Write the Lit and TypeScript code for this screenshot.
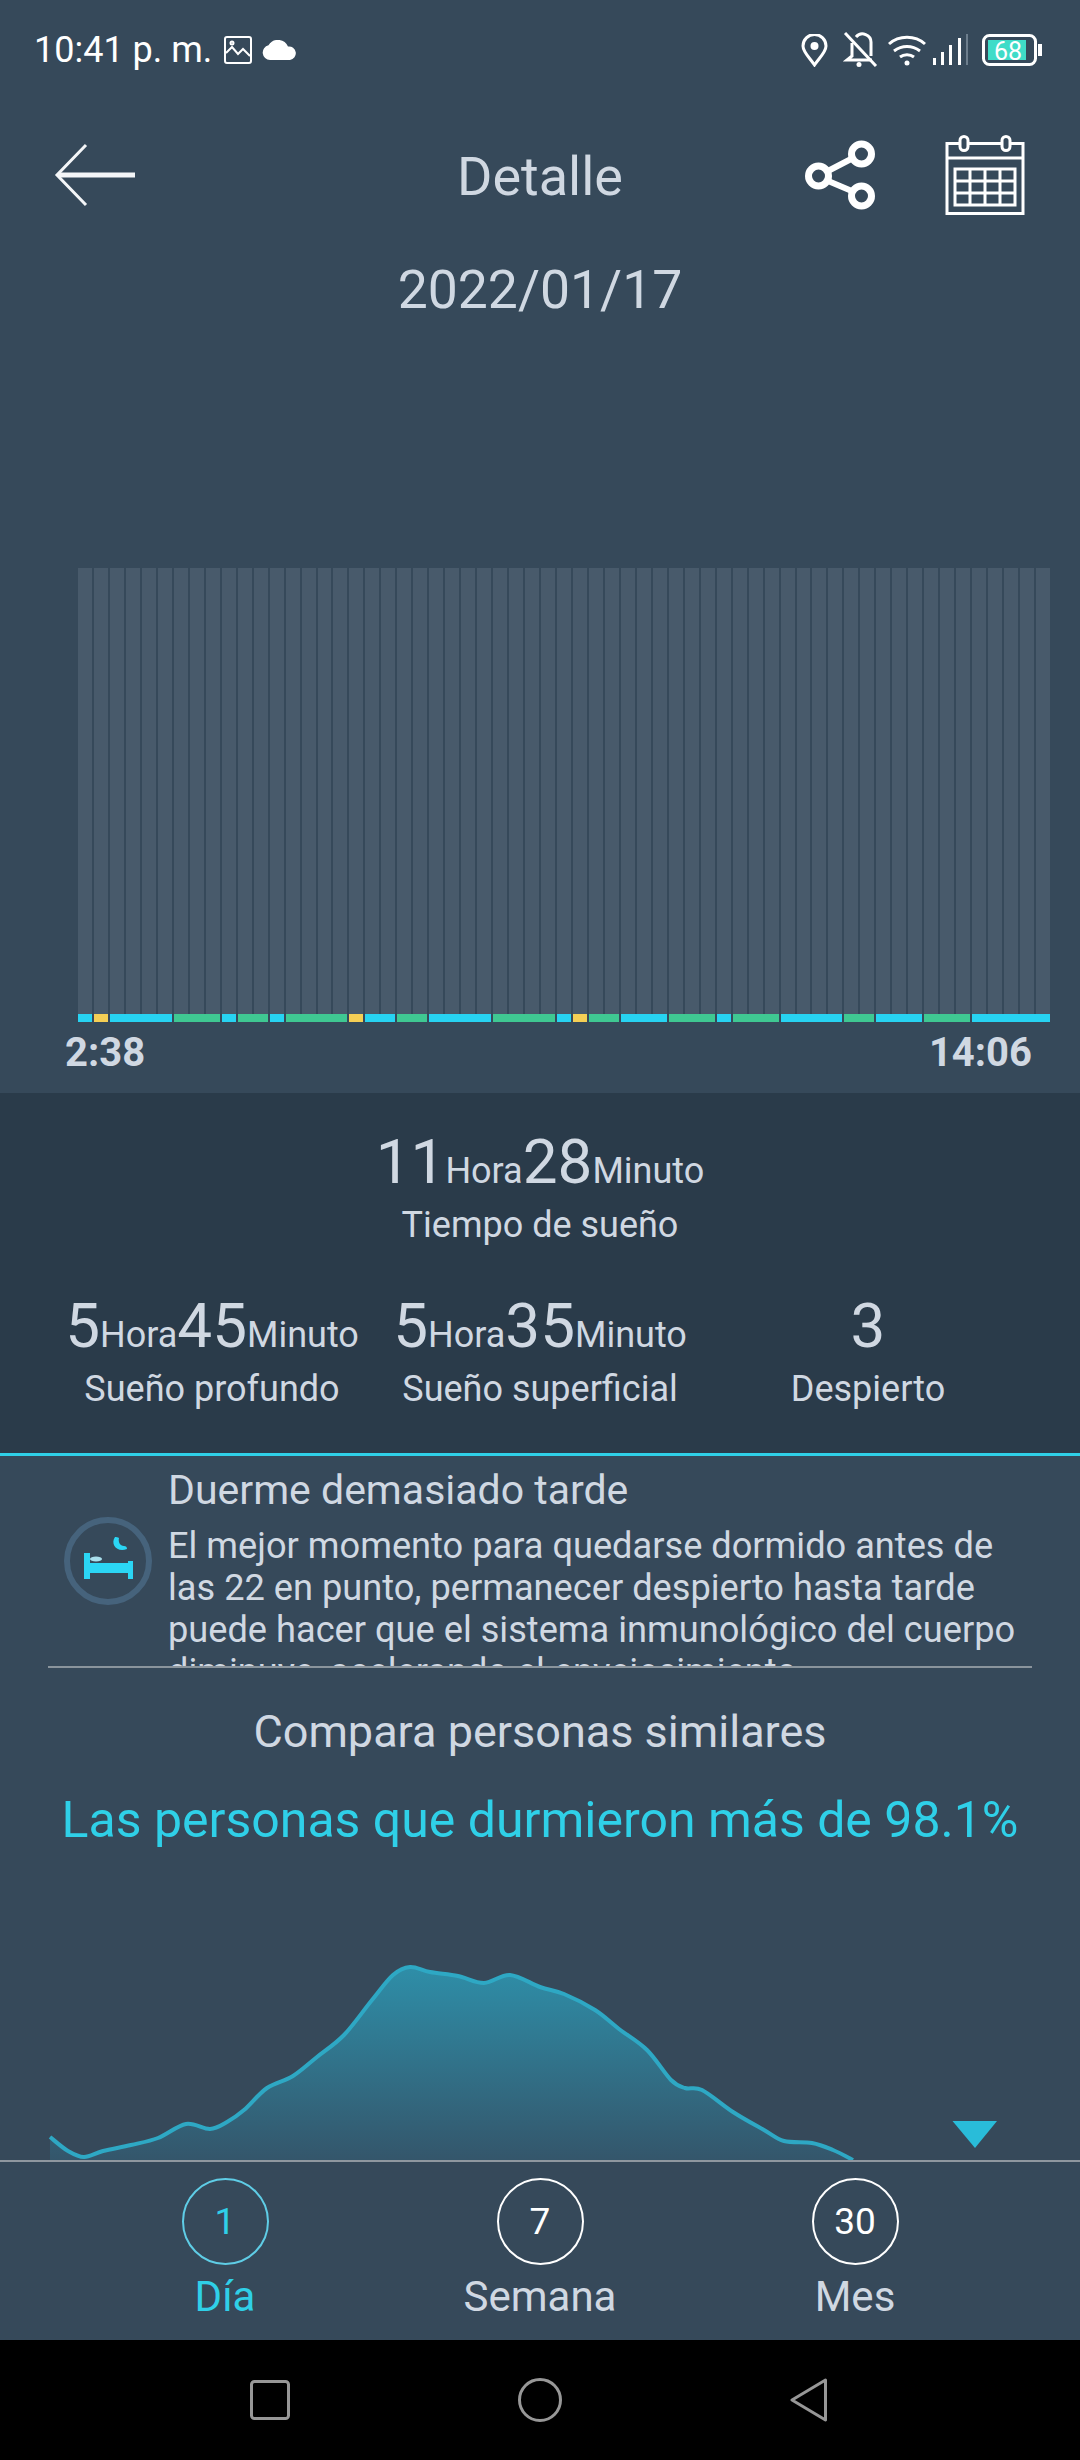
import { LitElement, html, css } from 'lit';
import { customElement } from 'lit/decorators.js';

type Stage = 'c' | 'y' | 'g';

// sleep stages, each one spanning a number of the 61 chart columns
const SEGMENTS: [Stage, number][] = [
  ['c', 1], ['y', 1], ['c', 4], ['g', 3], ['c', 1], ['g', 2], ['c', 1], ['g', 4],
  ['y', 1], ['c', 2], ['g', 2], ['c', 4], ['g', 4], ['c', 1], ['y', 1], ['g', 2],
  ['c', 3], ['g', 3], ['c', 1], ['g', 3], ['c', 4], ['g', 2], ['c', 3], ['g', 3], ['c', 5],
];

const STAGE_COLORS: Record<Stage, string> = { c: '#27d3f2', y: '#f5cf55', g: '#3fc892' };

const CURVE: [number, number][] = [
  [50, 2137], [68, 2151], [84, 2157], [103, 2151], [131, 2145], [158, 2138], [186, 2124],
  [210, 2129], [227, 2122], [244, 2110], [267, 2088], [293, 2076], [317, 2057], [344, 2035],
  [372, 2000], [393, 1975], [410, 1967], [430, 1972], [458, 1976], [484, 1983], [510, 1975],
  [540, 1987], [564, 1994], [595, 2010], [619, 2029], [647, 2050], [671, 2080], [685, 2088],
  [702, 2090], [733, 2112], [764, 2130], [784, 2141], [812, 2143], [833, 2150], [853, 2160],
];

// catmull-rom through the points
function smooth(pts: [number, number][]) {
  let d = `M${pts[0][0]} ${pts[0][1]}`;
  for (let i = 0; i < pts.length - 1; i++) {
    const p0 = pts[Math.max(i - 1, 0)];
    const p1 = pts[i];
    const p2 = pts[i + 1];
    const p3 = pts[Math.min(i + 2, pts.length - 1)];
    const c1x = p1[0] + (p2[0] - p0[0]) / 6;
    const c1y = p1[1] + (p2[1] - p0[1]) / 6;
    const c2x = p2[0] - (p3[0] - p1[0]) / 6;
    const c2y = p2[1] - (p3[1] - p1[1]) / 6;
    d += ` C${c1x.toFixed(1)} ${c1y.toFixed(1)} ${c2x.toFixed(1)} ${c2y.toFixed(1)} ${p2[0]} ${p2[1]}`;
  }
  return d;
}

@customElement('app-root')
export class AppRoot extends LitElement {
  static styles = css`
    :host {
      display: block;
      width: 1080px;
      height: 2460px;
      overflow: hidden;
      background: #36495a;
      color: #d0d8e2;
      font-family: Roboto, sans-serif;
    }
    svg {
      display: block;
    }

    .status {
      height: 100px;
      display: flex;
      align-items: center;
      justify-content: space-between;
      padding: 0 38px 0 34px;
      box-sizing: border-box;
      color: #fff;
    }
    .status-left {
      display: flex;
      align-items: center;
      font-size: 36px;
    }
    .status-left svg:first-of-type {
      margin-left: 12px;
    }
    .status-left svg:last-of-type {
      margin-left: 10px;
    }
    .status-right {
      display: flex;
      align-items: center;
    }

    .header {
      height: 150px;
      display: grid;
      grid-template-columns: 1fr auto 1fr;
      align-items: center;
    }
    .back {
      padding-left: 54px;
    }
    .title {
      font-size: 54px;
      padding-top: 2px;
    }
    .actions {
      display: flex;
      justify-content: flex-end;
      align-items: center;
      gap: 69px;
      padding-right: 55px;
    }
    .date {
      height: 80px;
      line-height: 80px;
      text-align: center;
      font-size: 53.5px;
    }

    .sleep-chart {
      margin: 238px 30px 0 78px;
      display: grid;
      grid-template-columns: repeat(61, 1fr);
      grid-template-rows: 446px 8px;
      column-gap: 2px;
    }
    .bar {
      background: #485a6b;
    }
    .times {
      display: flex;
      justify-content: space-between;
      padding: 9px 48px 18px 65px;
      font-size: 40px;
      line-height: 44px;
      font-weight: 700;
    }

    .summary {
      background: #2a3b4a;
      border-bottom: 3px solid #2fd0e8;
      padding: 39px 48px 42px;
      text-align: center;
    }
    .value {
      height: 60px;
      line-height: 60px;
      font-size: 62px;
      white-space: nowrap;
    }
    .value small {
      font-size: 36px;
    }
    .caption {
      margin-top: 11px;
      font-size: 36px;
      line-height: 44px;
    }
    .columns {
      margin-top: 49px;
      display: grid;
      grid-template-columns: repeat(3, 1fr);
    }
    .columns .caption {
      margin-top: 11px;
    }

    .advice {
      height: 210px;
      overflow: hidden;
      display: flex;
      gap: 16px;
      padding: 9px 40px 0 64px;
      box-sizing: border-box;
    }
    .advice svg {
      flex: none;
      margin-top: 52px;
    }
    .advice h2 {
      margin: 0 0 10px;
      font-size: 41px;
      line-height: 50px;
      font-weight: 400;
    }
    .advice p {
      margin: 0;
      font-size: 36.2px;
      line-height: 42px;
    }
    .rule {
      height: 2px;
      margin: 0 48px;
      background: #8a949c;
    }

    .compare {
      margin-top: 34px;
      text-align: center;
      font-size: 45px;
      line-height: 60px;
    }
    .percent {
      margin-top: 23px;
      text-align: center;
      font-size: 50px;
      line-height: 70px;
      color: #2fd0e8;
      white-space: nowrap;
    }

    .tabs {
      height: 180px;
      box-sizing: border-box;
      border-top: 2px solid #8f979f;
      display: grid;
      grid-template-columns: repeat(3, 315px);
      justify-content: center;
      padding-top: 16px;
    }
    .tab {
      display: flex;
      flex-direction: column;
      align-items: center;
      gap: 7px;
      font-size: 42px;
      line-height: 50px;
    }
    .dot {
      width: 87px;
      height: 87px;
      box-sizing: border-box;
      border: 2px solid #fff;
      border-radius: 50%;
      display: flex;
      align-items: center;
      justify-content: center;
      font-size: 37px;
      color: #fff;
    }
    .tab.on {
      color: #2fd0e8;
    }
    .tab.on .dot {
      border-color: #5fcde6;
      color: #2fd0e8;
    }

    .nav {
      height: 120px;
      background: #000;
      display: flex;
      align-items: center;
      gap: 228px;
      padding-left: 250px;
    }
  `;

  private statusIcons() {
    return html`
      <svg width="27" height="33" viewBox="0 0 27 33" fill="none" stroke="#fff" stroke-width="3">
        <path d="M13.5 31C8 23 2 18 2 12a11.500 11.500 0 0 1 23 0c0 6-6 11-11.500 19z" />
        <circle cx="13.500" cy="12" r="4" fill="#fff" stroke="none" />
      </svg>
      <svg style="margin-left:15px" width="36" height="36" viewBox="0 0 36 36" fill="none" stroke="#fff" stroke-width="3">
        <path d="M9 11v13l-5 4h25M13 5a8.500 8.500 0 0 1 15 6v13" />
        <path d="M2 1l31 33" />
        <circle cx="16" cy="32.500" r="2.500" fill="#fff" stroke="none" />
      </svg>
      <svg style="margin-left:9px" width="38" height="31" viewBox="0 0 38 31" fill="none" stroke="#fff" stroke-width="3">
        <path d="M1 9c10-9 26-9 36 0M6 16c8-6 18-6 26 0M12 22c4-3 10-3 14 0" />
        <circle cx="19" cy="28" r="2.500" fill="#fff" stroke="none" />
      </svg>
      <svg style="margin-left:7px" width="36" height="32" viewBox="0 0 36 32">
        <g fill="#fff">
          <rect x="0" y="24" width="3" height="7" />
          <rect x="8" y="18" width="3" height="13" />
          <rect x="16" y="11" width="3" height="20" />
          <rect x="25" y="4" width="3" height="27" />
        </g>
        <rect x="33" y="0" width="2" height="31" fill="#6d7e8d" />
      </svg>
      <svg style="margin-left:13px" width="60" height="32" viewBox="0 0 60 32">
        <rect x="1.500" y="1.500" width="52" height="29" rx="6" fill="none" stroke="#fff" stroke-width="3" />
        <rect x="6" y="6" width="38" height="20" fill="#3fdcc8" />
        <rect x="56" y="10" width="4" height="12" fill="#fff" />
        <text x="26" y="26" font-size="25" text-anchor="middle" fill="#fff" font-family="Roboto, sans-serif">68</text>
      </svg>
    `;
  }

  render() {
    const curve = smooth(CURVE);
    return html`
      <div class="status">
        <div class="status-left">
          <span>10:41 p. m.</span>
          <svg width="28" height="28" viewBox="0 0 28 28" fill="none" stroke="#fff" stroke-width="2">
            <rect x="1" y="1" width="26" height="26" rx="2" />
            <path d="M2 17l6-6 6 7 5-5 7 7" />
            <circle cx="8" cy="7" r="1.500" />
          </svg>
          <svg width="35" height="20" viewBox="0 0 35 20">
            <path fill="#fff" d="M8 20a7.500 7.500 0 0 1-1.500-14.800A11 11 0 0 1 26 6.500a6.800 6.800 0 0 1 2 13.500z" />
          </svg>
        </div>
        <div class="status-right">${this.statusIcons()}</div>
      </div>

      <div class="header">
        <div class="back">
          <svg width="82" height="64" viewBox="0 0 82 64" fill="none" stroke="#f4f6f8">
            <path stroke-width="3" d="M32 2L3 32l29 30" />
            <path stroke-width="5" d="M4 32h77" />
          </svg>
        </div>
        <div class="title">Detalle</div>
        <div class="actions">
          <svg width="71" height="70" viewBox="0 0 71 70" fill="none" stroke="#fff" stroke-width="7">
            <path stroke-width="6" d="M22 31.500l26-13.500M22 40.500l26 11" />
            <circle cx="13.500" cy="36" r="10" />
            <circle cx="56.500" cy="14" r="10" />
            <circle cx="56.500" cy="56" r="10" />
          </svg>
          <svg width="80" height="80" viewBox="0 0 80 80" fill="none" stroke="#fff" stroke-width="3">
            <path d="M15 8.500H2v70h76v-70H66M24 8.500h33M2 23h76" />
            <rect x="15" y="1.500" width="8" height="14" rx="4" />
            <rect x="57" y="1.500" width="8" height="14" rx="4" />
            <path d="M10 34h60v36H10zM10 46h60M10 58h60M25 34v36M40 34v36M55 34v36" />
          </svg>
        </div>
      </div>
      <div class="date">2022/01/17</div>

      <div class="sleep-chart">
        ${Array.from({ length: 61 }, () => html`<div class="bar"></div>`)}
        ${SEGMENTS.map(
          ([stage, span]) => html`<div style="grid-column:span ${span};background:${STAGE_COLORS[stage]}"></div>`
        )}
      </div>
      <div class="times"><span>2:38</span><span>14:06</span></div>

      <div class="summary">
        <div class="value">11<small>Hora</small>28<small>Minuto</small></div>
        <div class="caption">Tiempo de sueño</div>
        <div class="columns">
          <div>
            <div class="value">5<small>Hora</small>45<small>Minuto</small></div>
            <div class="caption">Sueño profundo</div>
          </div>
          <div>
            <div class="value">5<small>Hora</small>35<small>Minuto</small></div>
            <div class="caption">Sueño superficial</div>
          </div>
          <div>
            <div class="value">3</div>
            <div class="caption">Despierto</div>
          </div>
        </div>
      </div>

      <div class="advice">
        <svg width="88" height="88" viewBox="0 0 88 88">
          <circle cx="44" cy="44" r="41" fill="none" stroke="#46637c" stroke-width="6" />
          <g fill="#2bd6f5">
            <rect x="20" y="36" width="6" height="26" />
            <rect x="26" y="46" width="39" height="10" />
            <rect x="64" y="44" width="5" height="18" />
            <path d="M51 20C46 27 53 36 63 32C63 30 62 29 60 29C56 29 54 25 55 21C54 20 52 20 51 20Z" />
          </g>
          <ellipse cx="32" cy="42" rx="6" ry="2.500" fill="#a9dfec" />
        </svg>
        <div>
          <h2>Duerme demasiado tarde</h2>
          <p>
            El mejor momento para quedarse dormido antes de las 22 en punto, permanecer despierto hasta tarde puede
            hacer que el sistema inmunológico del cuerpo diminuye, acelerando el envejecimiento.
          </p>
        </div>
      </div>
      <div class="rule"></div>

      <div class="compare">Compara personas similares</div>
      <div class="percent">Las personas que durmieron más de 98.1%</div>

      <svg width="1080" height="305" viewBox="0 1855 1080 305">
        <defs>
          <linearGradient id="area" x1="0" y1="0" x2="0" y2="1">
            <stop offset="0" stop-color="#2e8ea8" />
            <stop offset="1" stop-color="#34566b" />
          </linearGradient>
        </defs>
        <path d="${curve} L853 2160 L50 2160 Z" fill="url(#area)" />
        <path d="${curve}" fill="none" stroke="#2ea8c4" stroke-width="4" />
        <path d="M952.500 2121H997L975 2148z" fill="#29bcd9" />
      </svg>

      <div class="tabs">
        <div class="tab on"><div class="dot">1</div>Día</div>
        <div class="tab"><div class="dot">7</div>Semana</div>
        <div class="tab"><div class="dot">30</div>Mes</div>
      </div>

      <div class="nav">
        <svg width="40" height="40" viewBox="0 0 40 40" fill="none" stroke="#979797" stroke-width="3">
          <rect x="1.500" y="1.500" width="37" height="37" rx="3" />
        </svg>
        <svg width="44" height="44" viewBox="0 0 44 44" fill="none" stroke="#979797" stroke-width="3">
          <circle cx="22" cy="22" r="20.500" />
        </svg>
        <svg width="38" height="44" viewBox="0 0 38 44" fill="none" stroke="#979797" stroke-width="3" stroke-linejoin="round">
          <path d="M35.500 2L2 22l33.500 20z" />
        </svg>
      </div>
    `;
  }
}
